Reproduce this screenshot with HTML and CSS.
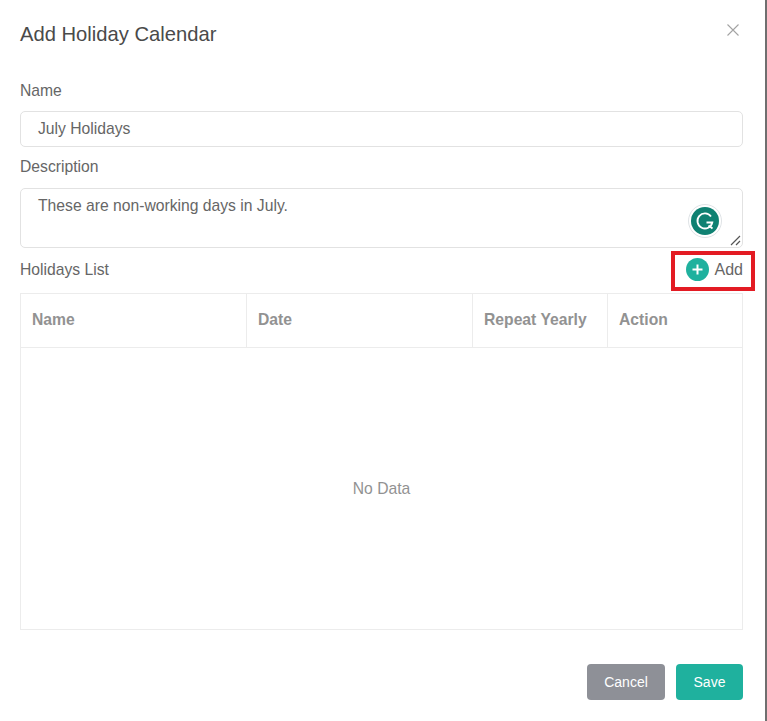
FILE: index.html
```html
<!DOCTYPE html>
<html lang="en">
<head>
<meta charset="utf-8">
<title>Add Holiday Calendar</title>
<link rel="stylesheet" href="styles.css">
</head>
<body>
<div class="modal">
  <header class="modal-header">
    <h1 class="title">Add Holiday Calendar</h1>
    <svg class="close" width="12" height="12" viewBox="0 0 12 12"><path d="M.5.5l11 11M11.500.5l-11 11" stroke="#a3a3a3" stroke-width="1.100" fill="none"/></svg>
  </header>
  <div class="label label-name">Name</div>
  <div class="input">July Holidays</div>
  <div class="label label-desc">Description</div>
  <div class="textarea">
    <span>These are non-working days in July.</span>
    <span class="grammarly">
      <svg width="34" height="34" viewBox="0 0 34 34">
        <circle cx="17" cy="17" r="16.500" fill="#fff" stroke="#dfe3e6"/>
        <circle cx="17" cy="17" r="14" fill="#0f8172"/>
        <path d="M23 12.500A7.500 7.500 0 1 0 24.300 18.500H18.500" fill="none" stroke="#fff" stroke-width="1.800"/>
        <path d="M20.500 21.500l4 3" fill="none" stroke="#fff" stroke-width="1.800"/>
      </svg>
    </span>
    <svg class="resize" width="11" height="11" viewBox="0 0 11 11"><path d="M1 10l9-9M6 10l4-4" stroke="#555" stroke-width="1.200" fill="none"/></svg>
  </div>
  <div class="list-head">
    <span class="list-title">Holidays List</span>
    <span class="add">
      <span class="plus"><svg width="11" height="11" viewBox="0 0 11 11"><path d="M5.500.5v10M.5 5.500h10" stroke="#fff" stroke-width="2" fill="none"/></svg></span>
      Add
      <span class="highlight"></span>
    </span>
  </div>
  <div class="table">
    <div class="row-head">
      <div class="th th-name">Name</div>
      <div class="th th-date">Date</div>
      <div class="th th-repeat">Repeat Yearly</div>
      <div class="th th-action">Action</div>
    </div>
    <div class="empty">No Data</div>
  </div>
  <footer class="footer">
    <button class="btn btn-cancel">Cancel</button>
    <button class="btn btn-save">Save</button>
  </footer>
</div>
</body>
</html>
```

FILE: styles.css
```css
* { box-sizing: border-box; }
html, body { margin: 0; padding: 0; background: #fff; }
body { width: 767px; height: 721px; overflow: hidden; font-family: "Liberation Sans", Arial, sans-serif; color: #666; }
.modal { width: 767px; height: 721px; padding: 0 22px 0 20px; border-right: 2px solid #6f6f6f; }
.modal-header { height: 80px; display: flex; justify-content: space-between; align-items: flex-start; }
.title { margin: 23px 0 0; font-size: 20.2px; line-height: 23px; font-weight: 400; color: #4a4a4a; }
.close { margin: 24px 4px 0 0; }
.label { font-size: 15.7px; line-height: 20px; color: #666; }
.label-name { height: 31px; padding-top: 1px; }
.label-desc { height: 31px; margin-top: 10px; }
.input { height: 36px; border: 1px solid #e2e2e2; border-radius: 5px; padding: 0 17px; font-size: 15.7px; line-height: 33px; color: #666; }
.textarea { position: relative; height: 60px; border: 1px solid #e2e2e2; border-radius: 5px; padding: 7px 17px; font-size: 15.7px; line-height: 20px; color: #666; }
.grammarly { position: absolute; right: 20px; top: 15px; width: 34px; height: 34px; }
.grammarly svg, .plus svg { display: block; }
.resize { position: absolute; right: 1px; bottom: 1px; }
.list-head { height: 45px; display: flex; justify-content: space-between; align-items: flex-start; padding-top: 11px; font-size: 15.7px; line-height: 20px; }
.list-title { margin-top: 1px; }
.add { position: relative; display: flex; align-items: center; gap: 6px; margin-top: -1px; font-size: 16px; color: #666; }
.plus { width: 23px; height: 23px; border-radius: 50%; background: #1fb19e; display: flex; align-items: center; justify-content: center; }
.highlight { position: absolute; left: -15px; right: -12px; top: -7px; height: 40px; border: 4px solid #e31b23; }
.table { height: 337px; border: 1px solid #ececec; }
.row-head { display: flex; height: 54px; border-bottom: 1px solid #ececec; }
.th { padding: 0 11px; font-size: 15.7px; line-height: 51px; font-weight: 700; color: #929292; border-right: 1px solid #ececec; }
.th-name, .th-date { width: 226px; }
.th-repeat { width: 135px; }
.th-action { flex: 1; border-right: 0; }
.empty { height: 281px; display: flex; align-items: center; justify-content: center; font-size: 15.7px; color: #929292; }
.footer { display: flex; justify-content: flex-end; gap: 11px; margin-top: 34px; }
.btn { height: 36px; border: 0; border-radius: 4px; font: 400 14px "Liberation Sans", Arial, sans-serif; color: #fff; padding: 0; }
.btn-cancel { width: 78px; background: #8e9097; }
.btn-save { width: 67px; background: #1fb19e; }
```
